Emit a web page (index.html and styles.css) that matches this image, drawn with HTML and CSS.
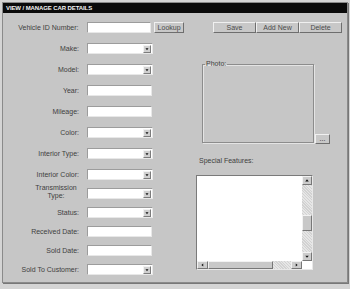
FILE: index.html
```html
<!DOCTYPE html>
<html lang="en">
<head>
  <meta charset="UTF-8">
  <title>View / Manage Car Details</title>
  <link rel="stylesheet" href="styles.css">
</head>
<body>
  <div class="window">
    <div class="titlebar">VIEW / MANAGE CAR DETAILS</div>

    <div class="content">
      <!-- Left column: fields -->
      <div class="fields">
        <div class="field-block upper">
          <div class="row">
            <label class="label">Vehicle ID Number:</label>
            <div class="textbox"></div>
            <button class="btn lookup">Lookup</button>
          </div>
          <div class="row">
            <label class="label">Make:</label>
            <div class="combo"><span class="drop"><svg viewBox="0 0 8 8"><polygon points="2,3 6,3 4,5.5" fill="#111"/></svg></span></div>
          </div>
          <div class="row">
            <label class="label">Model:</label>
            <div class="combo"><span class="drop"><svg viewBox="0 0 8 8"><polygon points="2,3 6,3 4,5.5" fill="#111"/></svg></span></div>
          </div>
          <div class="row">
            <label class="label">Year:</label>
            <div class="textbox"></div>
          </div>
          <div class="row">
            <label class="label">Mileage:</label>
            <div class="textbox"></div>
          </div>
          <div class="row">
            <label class="label">Color:</label>
            <div class="combo"><span class="drop"><svg viewBox="0 0 8 8"><polygon points="2,3 6,3 4,5.5" fill="#111"/></svg></span></div>
          </div>
          <div class="row">
            <label class="label">Interior Type:</label>
            <div class="combo"><span class="drop"><svg viewBox="0 0 8 8"><polygon points="2,3 6,3 4,5.5" fill="#111"/></svg></span></div>
          </div>
          <div class="row">
            <label class="label">Interior Color:</label>
            <div class="combo"><span class="drop"><svg viewBox="0 0 8 8"><polygon points="2,3 6,3 4,5.5" fill="#111"/></svg></span></div>
          </div>
        </div>

        <div class="field-block lower">
          <div class="row">
            <label class="label two-line">Transmission<br>Type:</label>
            <div class="combo"><span class="drop"><svg viewBox="0 0 8 8"><polygon points="2,3 6,3 4,5.5" fill="#111"/></svg></span></div>
          </div>
          <div class="row">
            <label class="label">Status:</label>
            <div class="combo"><span class="drop"><svg viewBox="0 0 8 8"><polygon points="2,3 6,3 4,5.5" fill="#111"/></svg></span></div>
          </div>
          <div class="row">
            <label class="label">Received Date:</label>
            <div class="textbox"></div>
          </div>
          <div class="row">
            <label class="label">Sold Date:</label>
            <div class="textbox"></div>
          </div>
          <div class="row">
            <label class="label">Sold To Customer:</label>
            <div class="combo"><span class="drop"><svg viewBox="0 0 8 8"><polygon points="2,3 6,3 4,5.5" fill="#111"/></svg></span></div>
          </div>
        </div>
      </div>

      <!-- Right column: actions, photo, features -->
      <div class="side">
        <div class="actions">
          <button class="btn action">Save</button>
          <button class="btn action">Add New</button>
          <button class="btn action">Delete</button>
        </div>

        <div class="photo-row">
          <fieldset class="photo">
            <legend class="photo-legend">Photo:</legend>
          </fieldset>
          <button class="btn browse">...</button>
        </div>

        <div class="features-label">Special Features:</div>
        <div class="features">
          <div class="features-top">
            <div class="features-text"></div>
            <div class="vscroll">
              <span class="arrow"><svg viewBox="0 0 8 8"><polygon points="2,5 6,5 4,2.5" fill="#111"/></svg></span>
              <span class="track upper-track"></span>
              <span class="thumb v-thumb"></span>
              <span class="track"></span>
              <span class="arrow"><svg viewBox="0 0 8 8"><polygon points="2,3 6,3 4,5.5" fill="#111"/></svg></span>
            </div>
          </div>
          <div class="features-bottom">
            <div class="hscroll">
              <span class="arrow"><svg viewBox="0 0 8 8"><polygon points="5,2 5,6 2.5,4" fill="#111"/></svg></span>
              <span class="thumb h-thumb"></span>
              <span class="track"></span>
              <span class="arrow"><svg viewBox="0 0 8 8"><polygon points="3,2 3,6 5.5,4" fill="#111"/></svg></span>
            </div>
            <div class="corner"></div>
          </div>
        </div>
      </div>
    </div>
  </div>
</body>
</html>
```

FILE: styles.css
```css
* {
  margin: 0;
  padding: 0;
  box-sizing: border-box;
}

body {
  background: #d4d4d4;
  font-family: "Liberation Sans", Arial, sans-serif;
  font-size: 7px;
  color: #404040;
  padding: 2px;
}

/* Window frame */
.window {
  width: 346px;
  height: 281px;
  background: #c6c6c6;
  border: 1px solid #8a8a8a;
  box-shadow: 1px 1px 0 #777;
}

.titlebar {
  height: 10px;
  background: #0a0a0a;
  color: #f4f4f4;
  font-weight: bold;
  font-size: 6px;
  line-height: 10px;
  padding-left: 3px;
  letter-spacing: -0.1px;
}

.content {
  display: flex;
}

/* Left column */
.fields {
  width: 181px;
  padding-top: 9px;
}

.field-block {
  display: flex;
  flex-direction: column;
}

.field-block.upper {
  gap: 10px;
}

.field-block.lower {
  gap: 8px;
  margin-top: 8px;
}

.row {
  display: flex;
  align-items: center;
  height: 11px;
}

.label {
  width: 76px;
  text-align: right;
  margin-right: 8px;
  white-space: nowrap;
}

.label.two-line {
  line-height: 8px;
  text-align: center;
  padding-left: 30px;
  margin-top: -4px;
}

.textbox,
.combo {
  background: #fff;
  border: 1px solid #9c9c9c;
  border-right-color: #e8e8e8;
  border-bottom-color: #e8e8e8;
  height: 11px;
}

.textbox {
  width: 65px;
}

.combo {
  width: 66px;
  display: flex;
  justify-content: flex-end;
  align-items: center;
  padding-right: 1px;
}

.drop {
  width: 8px;
  height: 8px;
  background: #d0d0d0;
  border: 1px solid #f2f2f2;
  border-right-color: #7c7c7c;
  border-bottom-color: #7c7c7c;
  display: flex;
}

.drop svg {
  width: 100%;
  height: 100%;
}

/* Buttons */
.btn {
  font-family: inherit;
  font-size: 7px;
  color: #4a4a4a;
  background: #c8c8c8;
  border: 1px solid #f0f0f0;
  border-right-color: #6e6e6e;
  border-bottom-color: #6e6e6e;
  cursor: pointer;
}

.lookup {
  width: 30px;
  height: 11px;
  margin-left: 3px;
  line-height: 8px;
}

/* Right column */
.side {
  flex: 1;
  padding-top: 9px;
}

.actions {
  display: flex;
  padding-left: 29px;
}

.action {
  width: 43px;
  height: 11px;
  line-height: 8px;
}

.photo-row {
  display: flex;
  align-items: flex-end;
  margin-top: 27px;
  padding-left: 18px;
}

.photo {
  width: 112px;
  height: 83px;
  border: 1px solid #8c8c8c;
  box-shadow: 1px 1px 0 #e4e4e4, inset 1px 1px 0 #e4e4e4;
  padding: 0;
}

.photo-legend {
  margin-left: 2px;
  padding: 0 1px;
  line-height: 8px;
  font-size: 7px;
}

.browse {
  width: 15px;
  height: 10px;
  margin-left: 1px;
  margin-bottom: -1px;
  padding: 0;
  line-height: 4px;
  font-size: 7px;
  color: #222;
  overflow: visible;
}

.features-label {
  margin-top: 14px;
  padding-left: 15px;
  line-height: 8px;
}

.features {
  margin-top: 10px;
  margin-left: 12px;
  width: 117px;
  height: 95px;
  border: 1px solid #7a7a7a;
  border-right-color: #e8e8e8;
  border-bottom-color: #e8e8e8;
  display: flex;
  flex-direction: column;
  background: #fff;
}

.features-top {
  flex: 1;
  display: flex;
}

.features-text {
  flex: 1;
}

.vscroll {
  width: 10px;
  display: flex;
  flex-direction: column;
}

.features-bottom {
  height: 8px;
  display: flex;
}

.hscroll {
  flex: 1;
  display: flex;
}

.corner {
  width: 10px;
  background: #fff;
}

.arrow {
  flex: none;
  width: 10px;
  height: 9px;
  background: #cccccc;
  border: 1px solid #f2f2f2;
  border-right-color: #777;
  border-bottom-color: #777;
  display: flex;
}

.hscroll .arrow {
  width: 11px;
  height: 8px;
}

.arrow svg {
  width: 100%;
  height: 100%;
}

.track {
  flex: 1;
  background: #dcdcdc;
  background-image: repeating-linear-gradient(45deg, #e6e6e6 0 1px, #d2d2d2 1px 2px);
}

.upper-track {
  flex: none;
  height: 30px;
}

.thumb {
  background: #c8c8c8;
  border: 1px solid #f2f2f2;
  border-right-color: #777;
  border-bottom-color: #777;
}

.v-thumb {
  height: 16px;
}

.h-thumb {
  width: 65px;
}
```
